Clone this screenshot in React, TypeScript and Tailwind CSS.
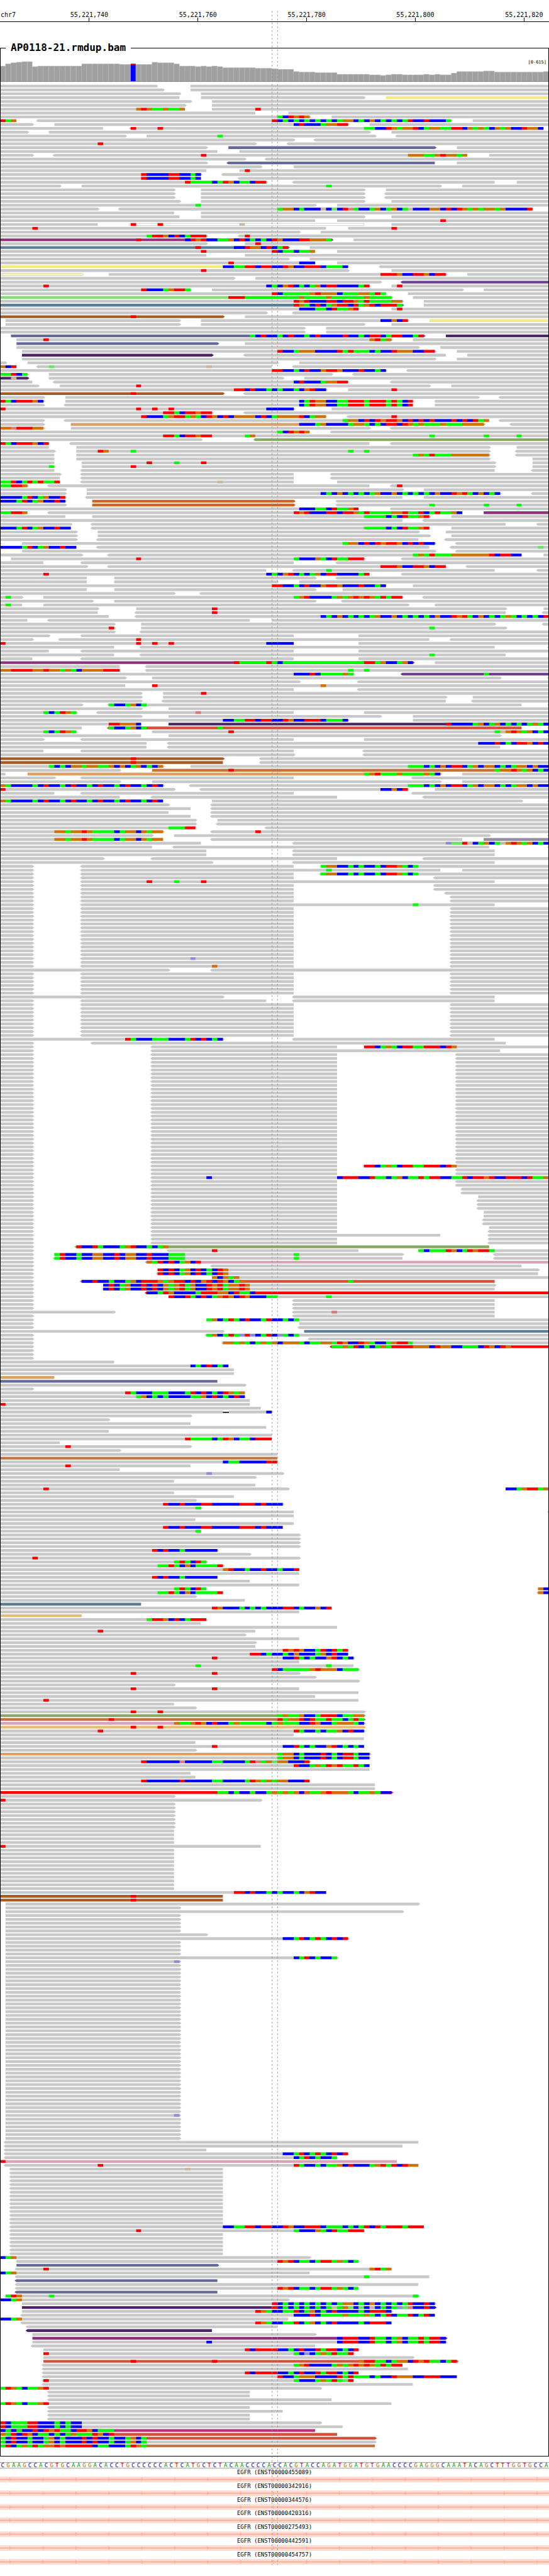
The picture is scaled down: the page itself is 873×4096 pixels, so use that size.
import React from "react";

const COLS = 101;
const COL_W = 1000 / COLS;
const ROW_PITCH = 7;
const ROW_H = 5;
const FIRST_ROW_Y = 154;

const READ_COLORS: Record<string, string> = {
  "": "#c8c8c8",
  Y: "#f2ea87",
  L: "#fff7ad",
  Z: "#ffffff",
  S: "#64699a",
  P: "#91307f",
  N: "#587e98",
  V: "#6f3c96",
  E: "#81e071",
  W: "#a65b24",
  K: "#4c2568",
  T: "#dca166",
  M: "#87a961",
  J: "#d06425",
  Q: "#d5503a",
  C: "#c4753f",
  U: "#958da4",
  H: "#dca2b5",
  F: "#ff0000",
  A: "#e9bc74",
  X: "#bd2c7a",
};

const BASE_COLORS: Record<string, string> = {
  R: "#ff0000",
  G: "#00ff00",
  B: "#0000ff",
  O: "#d17105",
  r: "#e07878",
  g: "#64e764",
  b: "#8c8cdc",
  o: "#cbb69f",
};

// One line per packed row. "<a-b>C" is a read from column a to b with optional
// arrow ends and colour code, "25ROG" paints mismatched bases from column 25,
// "xN" at the start of a line repeats it N times.
const PILEUP = `
0-29 35-
0-30> 35-
0-33> 37-
0-33 37-67> 71-Y
0-35> 39-
0-34> 39-
0-34 25OROGGOGGO 39- 47R
0-47 53-
0-57> 51GBRORO 61-
0-3 0RGO <7-83 50RBGBGBGBGBGBGOOBGBOBGBGBGRBBRBBBG 87-
0-6> 10-64> 54BRBBBGOORR 68-
0-19 <24-100 24R 29R 67GGBBROGOORBGOOGGRRBOGOGBOGOBBROOB
0-5> 9-68> 72-
0-23> 27-69> 40G <73-
0-54> <58-
0-47> 18R <53-
0-38> 42-80>S 84-
0-40 44-
0-6> <10-86 37R 75OOOGGOROOGO 90-
0-45> <49-
0-38> <42-80S 84-
0-48> 54-
0-38 44- 45R
0-37> 26RBBBBRRBBGB <41-
0-37 26RBBBBRRBBGB <44-
0-49> 34RGGGGBGROBGGBRR <54-91 95-
0-11> 15-81> 60G 85-
0-32> 37-67> 71-
x2 0-32> 37-67> <71-
0-33> 37-67> 72-
0-58> 36G 62-
0-18> <22-98 51GOOBGBBBoBgBRrGBBGOBGOBGoBBBOOBRBROGOGOOGOBBBBR
0-32 37-
0-33 37-67> 72-
0-58 62- 81R
0-18 <24-67Z 24R 29R 44o 72-
0-60 6R 64- 72R
0-55> 59-
0-38> 27GRROBRBGRRR <44- 45R
0-61>P 25R 34BRORBBGGOBRBGBGBROBBBRROOOG 65-
0-38> 45- 47R
0-53>N 36R 43BBROOBRBGR 57-
0-58 37R 50RBGGBGGO 62-
0-38 45-
0-53> 57-
0-58 42R 55BBB 62-
0-64>Y 41BBGGRRBRRBBROBBRRRBGGGB <70-
0-64> 37R 72-
0-15>L 20-82> 70RRROBBRROBRR 86-
0-43> 47-
0-70> <74-V
0-68> 8R 49BGBORBGBGOBRRBBBBGR 72- 73R
0-35> 26RBBBGORRG 39-85> 89-
0-71 50RBGGGGGOROOOBGGGOOGRG 75-
0-72>E 42RRRGGGGGGGGGGOGGGGOGGGGGGOGGGG 76-
0-74> 54RORBBBRRBRROGRGGGGOO 78-
0-74>N 54ROGBRBGORRBRGORBRRRG 78-
0-66> 55BBBGGBRGGOR 72- 73R
0-49> <54-
0-41>W 24R 45-
1-33> 37-75> 70BBOBR 79-Y
1-33> 37-67> 72-
x2 0-56> 60-
2-78>S 46GBRBBGBRBBGBRBBBBRBBGBRRBGRRBBGR 82-K
3-72> 8R 68ORGO 76-
3-40>S 45-
3-77> 81-
4-80> 51RBBGOOOBBBBRGRGGGBGBBROOOBBRR 84-
4-39>K <45-82 86-
4-80> 84-
0-1> 5-51> 55-
0-3 0OBR <7-50 9g 38o <54-
0-71> 50RRBBGBRBBORROBBBRBBGB <75-
0-5> 0GGRBG 9-61> <65-
0-5>K 2o 9-52> 56-
0-6 <10-64 54BRBBBGOORR <72-
0-7> 11-79> 25R 83-
0-60> 43RRBRBBGBGBBGBORBB 64- 72R
0-41>W 24R <45-
0-8> 12-88> <92-
0-8> 0RGBRRROB 12-76> 55BGROOBBGGRRRGRRRGRGBR 80-
0-8> <12-76 55BGROOBBGGRRRGRRRGRGBR 80-
0-54> 0R 25R 28R 31R 49BBBBB 61-
0-39> 30RRGBRRORR <45-
0-60 26RBBBGORRGOGBROBRBOOOOBRBGOOOORBGOO <64- 72R
0-8> <12-88 63GOOBRBRORROBRBRBRBBBRBRBRGO <92-
0-8> 13-89>T 55BBBGOBBBBGOOGBGBRRBROGOGGGOGGGOOOO <94-
0-8> 0OOrRRROO 13-68> <72-
0-57 51GBRORO <61-
0- 30RRGBRRORR 45GO 79G 89G 95G
0-37> <47-M
0-9 0RGBRRROBR <13-68 <72-
0-9 14-90> 95-
0-10> 14-90> 18RO 24G 64G 67G <95-
0-10 14-90> 76GOGRGGGOOOOOOO <95-
0-10 14-90> 98-
0-10 15-91> 27R 32G 37R 98-
0-10 9G 15-91> 24R 98-
0-10 <15-91 <98-
0-11> <15-54 <61-
0-11 <15-54 <61-
0-11 0GGRBGRGRGGR <15-54 40o 62-
0-5> 0GGRRO <9-68 <72- 73R
0-12> 16-74> 78-
0-12> 16-92> 59BGBOBGBGBGOBBOBGBGBGBOBBRORGBOBGB <98-
0-12> 0BBBBGRBGOBBR <16-74 78-
0-12> 0BBBGRBGOBBRB 17-54>J <62-
0-12> 17-54>J <62- 79G 89G 95G
0-66 55BBBGGBRGGOR <72-
0-5 0GGRRO <9-85 54RORBBBRRBRROGRGGGGOORGGRBGRGGOB 89-P
0-12 17-79> 67GGGGBGBRGGOR 83-
0-74 <78-
0-13> <17-93 <99-
0-13 0BBBGRBGOBBRBB <17-79 67GGGGBGBRGGOR 83-
0-14> 18-77> 82-
0-14> 18-79> 83-
0-14> <18-77 <82-
0-0> 4-80> 63GOOBRBRORROBRBRBB <84-
0-14 0BBBBGRBGOBBRBB <18-79 <83- 99g
4-80> <84-
0-15> <20-96 76GOGRGGGOOOOOOORBRRBB 100-
2-67> 25R 54GBBBOGBRGGRRR <74-
0-8 <15-54 <62-
0-16> <20-82 70RRROBBRROBRR <86-
0-49 <54-91 60G <99-
0-68 8R 49BGBORBGBGOBRRBBBBGR <74-
0-16 21-58> <62-
0-16 21-51> 55-
0-71 50RRBBGBRBBORROBBBRBBGB 76-
0-16 21-58> 63-
0-32> <37-
0-4> 1G 8-74> 54GORBBBBGOGOROROGRGRR <78-
0-17> 21-58> <63-
0-4 1G 8-75> 80-
0-18> 25-93> 39R 100-
0-18 <25-93 39R <100-
0-20 <25- 59BGBOBGBGBGOBBOBGBGBGBOBBRORGBOBGBGOGBGBGBR
0-5 <9-46 50-
0-21> 26-91> <100-
0-21> 20R 26-93> 79G
0-21> <26-
0-9> <15-54 66-
0-6> <11-79 25R <83-
0-54 0R 25R 28R 31R 49BBBBB 66-
0-21 <26-91 <101-
0-9 <15-54 66-
0-21 <26-93 79G
0-6 <15-54 66-
0-76>P 43RGGGGGRGBGGGGGGGGGGGGGGGRRGOBBGOB 80-
0-22 <27-
0-22 0OORRRROOROOGOGBOOOORRR <27- 64G 67G
0-65> 54BBBRBGGGGOG <74-V 89G
0-23> 28-92> <101-
0-55> <66-
0-23 28- 28R 59O
0-54 <66-
0-26> 30- 37R
0-26> 30-82> 87-
0-26> <30-82 <87-
0-15> <20-96 20GBBGOBG <101-
0-26> 31-
0-14> 8GBGROG <18-54 36r 67-
0-26> 31-70> 76-
0-64> 41BBGGRRBRRBBROBBRRRBGGGB 76-
0-26 20RROOOB 31-K 82RBBBBGOBGOBGBGBGOGB
0-15 <20-96Q 20GBBGOBG 40G <101-
0-14 8GBGROG 28- 42R 91GoOROGOBGB
0-26 31-92> <101-
0-8> <15-54 67-
0-27 <31- 88BBBRBGBRROBRB
0-27 <31-92 <101-
0-8 <15-54 <67-
0-54> <67-
0-41>W 24R <48-
0-41W 24R <48-
0-30> 9GBGBOOGOOGGOBOBGOBGBO 35- 75GGGBGBOBRRBGOBOOBGBGOOBOBB
0-22> 28-C 42R 91GOOROGOBGB
0-1 5-81>T 67GORGGGOGGGGOGB 85-
0-10> <15-54 <76-
0-22> 28-81> 85-
0-30> 0OGBBBBGBRBBGBRBBGBRBBGBRBBGBRB <35- 75GGGBGBOBRRBGOBOOBGBGOOBOBB
0-32> 0R <37-75 70BBOBR 80-
0-10 <15-54 <76-
0-22 <28-62 <78-
0-30 0OGBBBBGBRBBGBRBBGBRBBGBRBBGBRB 39-96> <101-
0-31> <39-
0-35 <39-
0-31 <39-
0-35 <39-
0-36> 40-
0-36> <40-
0-36 31GGGRR <49-
0-30> 10OOGOOROGGGGBGOOBOGOO <39- 47R
0-28> 32-90> <101-
0-30 10OOGOOROGGGGBGOOBOGOO <39-85 89-U
0-37 <54- 82bggRoBGOBGoOROGOBGB
0-28 <32-90 <101-
x2 0-38 <54-91
0-19> <28-62 <78-
0-39> <54-91
0-6> <15-54 59- 59GOOBBGBGBBGBRROGBG
0-6> <15-81 60G 85-
0-6> <15-54 <59- 59GOOBBGBGBBGBRROGBG
0-6> <15-54 <80-
0-6> <15-91 27R 32G 37R
x2 0-6> <15-54 <80-
0-6> <15-54 <82-
x2 0-6> <15-54 <83-
0-6> <15-91 76G
x13 0-6> <15-54 <83-
0-6> <15-54 35b <83-
0-6> <15-54 <83-
0-6> <15-54 39O <83-
0-31> <39-
x6 0-6> <15-54 <83-
0-41> <54-91
0-6> <15-49 <54-91
x9 0-6> <15-54 <83-
0-41> 23RGBBBGGGBBBGRBRBGB <54-91
0-6> <17-93
0-6> <28-62 67- 67RRBGOGBRRGGRRRBRO
0-6> <28-92
x29 0-6> <28-62 <84-
0-6> <28-62 <67- 67RRBGOGBRRGGRRRBRO
x2 0-6> <28-62 <84-
0-6> <28- 38B 62BRRRBBRGGBGOBGGRGRRBBGGRBRRORBBRRRBRGGO
x2 0-6> <28-62 <84-
x2 0-6> <28-62 <85-
0-6> <28-62 88-
x3 0-6> <28-62 <88-
x2 0-6> <28-62 89-
x2 0-6> <28-62 <89-
0-6> <28-62 90-
0-6> <28-62 <90-
0-6> <28-81 <90-
x2 0-6> <28-62 <90-
0-6> <14-90M 14RBBRGBBBGORBBGBGO
0-6> <31-66 39R 77- 77GBGGGROBGRORRG
0-6> 10-74> 10GRBBGBBOOBBRBOOBBRBBBGGG 54G <91-
0-6> <10-74 10GRBBGBBOOBBRBOOBBRBBBGGG 54G <91-
0-6> <27-H 27OGRBRBGOBR
0-6> <39-96
0-6> 29-99> 29RBRBGOBRBGBRO
0-6> <29-99 29RBRBGOBRBGBRO
0-6> 39- 39OBOGO
0-6> <15-91Q 15BBRBBGBBGOBRRROGORRBRBORBROBGO 64G
0-6> 19-91> 19BRBGOBBRBRBOGORGOBBRORGOORO
0-6> <19-91 19BRBGOBBRBRBOGORGOBBRORGOORO
0-6> <27-F 27BBGROBBBBGRRROOBRGGB
0-6> 31- 31RBBRGBRBGOROBROBBBGG 60G
x3 0-6> <54-91
0-21> <54-91 61r
0-6> <54-91
0-6> 38- 38GOBGRGBRBBGRBBGBG
0-6> 55-
0-6> <55-
0-41> 56-N
0-6> <38- 38GOBGRGbRbBGRBbGBG
0-6> <57-
0-6> <41- 41OOGOGBGOGOBOOOGBGGOOGROBBROGBBGORRG
0-6> <61-F 61GGOGRBGBGOGRRRROOOBROOBBGGGBROBRO
x3 0-6>
0-21
0-42 35BGBRBGB
x2 0-43
0-10T
0-40S
0-45>
0-6>
0-45 23RGBBBGGGBBBGRBRBGBROGO
0-45 25GOBGBGBBBBGGOBRBGBRB
0-46
0-46 0R
0-48
0-50> 41D 49B
0-35>
0-20>
0-35
0-49
0-20
0-50
0-50 34RGGGGBGROBGGBRRR
0-11
0-35> 12R
0-22>
0-51
0-51C
0-51 41BGGBBBBBRR
0-35 12R
0-22
0-52> 38b
0-47>
0-32
0-47
0-53> 8R 93- 93BBGORRGO
0-32
0-43
0-36>
0-52> 30RBBRBBBRRBBBBBRRRBRBBB
0-37> 36G
0-54 <101-
0-54
0-36
0-54
0-52 30RBBRBBBRRBBBBBRRRBRBBB
0-37 36G
x4 0-55>
0-40> 28RBRBBGBBBBBB
0-46>
0-55> 6R
0-38> 32GRGBRG
0-41> 29GGRGBOBGGGGR
0-55 41ORBBGBBRBBGBBR
0-55
0-40 28RBRBBGBBBBBB
0-46
0-55
0-38 32GRGBRG 99- 99OB
0-41 29GGRGBOBGGGGR <99- 99OB
0-36>
0-45
0-26N
0-61 39ROBBBGBGBGBBBRRBGBBOBR
0-55
0-15A
0-38 27GRROBRBGRRR
0-37
0-62
0-47 18R
0-45>
0-55
0-47>
0-47
0-64 52ROROBBGRBRGR
0-64 46RRBGBBGBOBBBGOBRBB
0-65> 39R 52BBRGBGBBORBGB
0-55
0-65 36G 60G
0-66> 50RBGGGGGOROOOBGGG
0-55> 24R 39R
0-58>
0-66>
0-32>
0-55 24R 39R
0-66
0-58
0-66 8R
0-32
0-36>
0-67> 24R 29R
0-67>M 51GOGGOBBGRRRBGGOO
0-67>C 20R 51RGOORBRGGRGGBGRG
0-67>H 32OGGOROBRBBGOGGGGGBGOGGGBBROBBGOOOGB
0-67>A 24R 29R
0-67> 18R 54RGBBGBGGOBRBB
0-54
0-67
0-36
0-67 39R 52BBRGBGBBORBGBGB
0-36>
0-68>T 51GOOBGBBBRBGBRRGBB
0-68> 51GOOBGBBBRBGBRRGBB
0-57> 26RBBBBBBrBBBBBGGBBBBGRrGOgOOBBBR
0-68 54RBBGOGRORGGRGB
0-68
0-35
0-36
0-57 26RBBBBBBRBBBBBGGBBBBGROGOGOOBBBR
x2 0-69
0-72>F 40GGBGBBGBBGOGOGOBOGGOROOOGBGGOGBB
0-32>
0-48> 0R
x7 0-32>
x4 0-32
0-48 0R
x11 0-32
0-60 43RRBRBBGBGBBGBORBB
x2 0-41W 24R
1-77>
1-33>
1-74>
x5 1-33>
1-38>
1-64> 52BBGRBGRGBRBR
x4 1-33>
1-62> 54BGRBGBBG
1-33> 32b
x39 1-33>
1-33> 32b
x6 1-33>
<1-77
<1-74
<1-38
<1-64 52BBGRBGRGBRBR
<1-62 54BGRBGBBG
0-73H 0R
<1-77 18R 54RGBBGBGGOBRBBBGORGRBROO
<2-41 34o
x14 <2-41
<2-78 41BBGGRRBRRBBROBBRRRBGGGBGBGRBRGRRRGRRR
<2-67 25R 54GBBBOGBRGGRRR
x6 <2-41
0-57> 0BGO
3-66> 51RORBGGBGRRGOGBG
3-40>S
<3-72 8R 68ORGO
0-57 0BGO
<3-79 67G
<3-40S
<3-77
<3-66 51RORBGGBGRRGOGBG
<3-40S
1-77> 1GRO 9G 76G
0-53> 0BBGO
4-80> 50RBGBGBGBGBGBGOOBGBOBGBGBGRBBRB
4-80>K 50RBGBGBGBGBGoGOgBgBoBGBGbgrBBRB
4-72> 47ROGBBGGRBGOBGBRBBBBGBRRRB
<4-80 54BBBRBGGGGOGGGOGBGRBGGRBGRB
0-53 0BBGO
<4-72 47ROGBBGGRBGOBGBRBBBBGBRRRB
<5-51
<5-39K
6-58>
6-82>P 62BRRRBBRGGBGOBGGRGRRB
6-82> 38B 62BRRRBBRGGBGOBGGRGRRB
<6-58
8-66> 45RBRRRRBBGBRBBRGRRBGBR
8-65> 8R 54GBbBGOGRGGR
8-76>
8-84>Q 24R 39R 66ORRGGBGOOBRORGGBGR
<8-74 54GORBBBBGOGOROROGRGRR
<8-75
<8-66 45RBRRRRBBGBRBBRGRRBGBR
<8-84 51RBBGOOOBBBBRGRGGGBGBBROOOBBRRRBBB
<8-65 8R 54GBBBGOGRGgR
<8-76
0-59> 0GROGBGGOR
x2 <9-46
<9-61
0-72 0GROGBGGOR
<9-46
<9-52
x2 <9-46
0-59> 0RBGGGRRBBBGBGBB
0-63 0RBGGGRRBBBGBGBB
0-58X 0BGBGBBRBRORGGBRROBGGG
0-62Q 0OGRBROBGGBGBGOGGGROBR
0-69>Q 0GBRBBGBBGOBGBBBRBRBBGBBGOBG
0-69> 0GBRBBGBBGOBGBBBRBRBBGBBGOBG
0-69C 0GRBGOGRGOORORRRRRBGGBBBGROG
`;

const ROWS: string[] = PILEUP.trim()
  .split("\n")
  .flatMap((line) => {
    const m = /^x(\d+) (.*)$/.exec(line);
    return m ? Array<string>(Number(m[1])).fill(m[2]) : [line];
  });

// Top edge of each coverage bar, run-length encoded as [top, columns].
const COVERAGE: number[] = (
  [
    [120, 1], [116, 1], [114, 1], [113, 1], [112, 2], [121, 1], [120, 8], [116, 7], [117, 2],
    [116, 1], [117, 3], [113, 1], [114, 3], [116, 1], [120, 3], [121, 1], [120, 1], [121, 1],
    [120, 1], [121, 1], [123, 6], [124, 3], [125, 1], [126, 3], [130, 1], [131, 3], [132, 4],
    [135, 6], [136, 2], [137, 1], [136, 1], [135, 2], [136, 4], [135, 1], [136, 1], [135, 1],
    [136, 2], [133, 1], [130, 5], [129, 2], [131, 9], [130, 1],
  ] as [number, number][]
).flatMap(([top, n]) => Array<number>(n).fill(top));

const SEQUENCE =
  "CGAAGCCACGTGCAAGGACACCTGCCCCCCACTCATGCTCTACAACCCCACCACGTACCAGATGGATGTGAACCCCGAGGGCAAATACAGCTTTGGTGCCA";

const LETTER_CLASS: Record<string, string> = {
  A: "text-[#009600]",
  C: "text-[#000096]",
  G: "text-[#b46400]",
  T: "text-[#aa0000]",
};

const TRANSCRIPTS = [
  "ENST00000455089",
  "ENST00000342916",
  "ENST00000344576",
  "ENST00000420316",
  "ENST00000275493",
  "ENST00000442591",
  "ENST00000454757",
];

const POSITIONS = ["55,221,740", "55,221,760", "55,221,780", "55,221,800", "55,221,820"];

const colX = (c: number) => Math.round(c * COL_W);

function Read({ token, y }: { token: string; y: number }) {
  const m = /^(<?)(\d+)-(\d*)(>?)([A-Z]?)$/.exec(token);
  if (!m) return null;
  const x0 = colX(Number(m[2]));
  const x1 = m[3] === "" ? 1000 : colX(Number(m[3]));
  const outlined = m[5] === "Z" || m[5] === "L";
  const inset = outlined ? 0.5 : 0;
  const left = m[1] ? ` L${x0 - 1.5} ${y + 4} L${x0 - 3.5} ${y + 2.5} L${x0 - 1.5} ${y + 1}` : "";
  const right = m[4] ? ` L${x1 + 1.5} ${y + 1} L${x1 + 3.5} ${y + 2.5} L${x1 + 1.5} ${y + 4}` : "";
  const d = `M${x0} ${y + inset} L${x1} ${y + inset}${right} L${x1} ${y + ROW_H - inset} L${x0} ${y + ROW_H - inset}${left} Z`;
  return <path d={d} fill={READ_COLORS[m[5]]} stroke={outlined ? "#c8c8c8" : undefined} />;
}

function Bases({ token, y }: { token: string; y: number }) {
  const m = /^(\d+)([A-Za-z]+)$/.exec(token);
  if (!m) return null;
  const start = Number(m[1]);
  if (m[2] === "D") {
    return (
      <>
        <rect x={colX(start)} y={y} width={11} height={ROW_H} fill="#fff" />
        <rect x={colX(start)} y={y + 2} width={11} height={2} fill="#000" />
      </>
    );
  }
  const runs = m[2].match(/(.)\1*/g) ?? [];
  let at = start;
  return (
    <>
      {runs.map((run, i) => {
        const x = colX(at);
        at += run.length;
        const overlap = i < runs.length - 1 ? 0.8 : 0;
        return (
          <rect key={i} x={x} y={y} width={colX(at) - x + overlap} height={ROW_H} fill={BASE_COLORS[run[0]]} />
        );
      })}
    </>
  );
}

function Ruler() {
  return (
    <header className="flex h-[35px] items-end overflow-hidden border-b border-black text-[10px] leading-[12px]">
      <div className="w-[6.36%] shrink-0 self-end whitespace-nowrap pb-[4px] pl-px">chr7</div>
      {POSITIONS.map((p) => (
        <div key={p} className="grid w-[19.8%] shrink-0 justify-items-center">
          <span className="col-start-1 row-start-1 pb-[4px]">{p}</span>
          <span className="col-start-1 row-start-1 h-[6px] w-px self-end bg-black" />
        </div>
      ))}
    </header>
  );
}

function Coverage() {
  return (
    <div className="relative">
      <svg viewBox="1.15 98.5 997.7 53.5" className="block h-auto w-full" role="img" aria-label="Coverage">
        {COVERAGE.map((top, i) => {
          const x = colX(i);
          const w = colX(i + 1) - x;
          return (
            <g key={i}>
              <rect x={x} y={top} width={w} height={148 - top} fill="#b2b2b2" />
              <rect x={x} y={top + 1} width={w - 1} height={147 - top} fill="#a0a0a0" />
            </g>
          );
        })}
        <rect x={colX(24)} y={116} width={9} height={2} fill="#ff0000" />
        <rect x={colX(24)} y={118} width={9} height={30} fill="#0000ff" />
        <rect x={0} y={148} width={1000} height={1} fill="#6e6e6e" />
      </svg>
      <span className="absolute right-[3px] top-[9px] text-[7px] leading-[9px]">[0-615]</span>
    </div>
  );
}

function Reads() {
  return (
    <svg viewBox="1.15 152 997.7 4321" className="block h-auto w-full" role="img" aria-label="Aligned reads">
      {ROWS.map((row, i) => {
        const y = FIRST_ROW_Y + i * ROW_PITCH;
        const tokens = row.split(" ");
        return (
          <g key={i}>
            {tokens.map((t, j) => (t.includes("-") ? <Read key={j} token={t} y={y} /> : null))}
            {tokens.map((t, j) => (t.includes("-") ? null : <Bases key={j} token={t} y={y} />))}
          </g>
        );
      })}
    </svg>
  );
}

function Transcript({ id }: { id: string }) {
  const arrows = Array.from({ length: 17 }, (_, i) => 18 + i * 60);
  return (
    <div className="flex min-h-0 flex-col">
      <div className="flex h-[13px] items-center justify-center text-[9px] leading-[9px]">EGFR ({id})</div>
      <svg
        viewBox="0 0 1000 10"
        preserveAspectRatio="none"
        className="block h-[9px] w-full shrink-0 bg-[#ffdccf]"
        aria-hidden="true"
      >
        <rect x={0} y={4} width={1000} height={2} fill="#ffa999" />
        {arrows.map((x) => (
          <path key={x} d={`M${x - 0.5} 1 L${x + 2} 4.5 L${x + 2} 5.5 L${x - 0.5} 8.5 Z`} fill="#ffa999" />
        ))}
      </svg>
    </div>
  );
}

export default function App() {
  return (
    <main className="relative w-full bg-white pb-[18px] font-['DejaVu_Sans_Mono',monospace] text-black">
      <Ruler />
      <fieldset className="mt-[31px] min-w-0 border border-black">
        <legend className="ml-[8px] px-2 text-[16px] font-bold leading-[20px]">AP0118-21.rmdup.bam</legend>
        <Coverage />
        <Reads />
      </fieldset>
      <div className="mt-[9px] grid grid-cols-[repeat(101,minmax(0,1fr))] border-y border-[#aaaaaa] text-center text-[9px] leading-[8px]">
        {SEQUENCE.split("").map((c, i) => (
          <span key={i} className={LETTER_CLASS[c]}>
            {c}
          </span>
        ))}
      </div>
      <section className="grid h-[153px] auto-rows-fr">
        {TRANSCRIPTS.map((id) => (
          <Transcript key={id} id={id} />
        ))}
      </section>
      <svg
        viewBox="0 0 1000 4690"
        preserveAspectRatio="none"
        className="pointer-events-none absolute inset-0 h-full w-full"
        aria-hidden="true"
      >
        <path d="M495.5 20 V4670 M505.5 20 V4670" stroke="#8c8c8c" strokeWidth={1} strokeDasharray="3 4" />
      </svg>
    </main>
  );
}
